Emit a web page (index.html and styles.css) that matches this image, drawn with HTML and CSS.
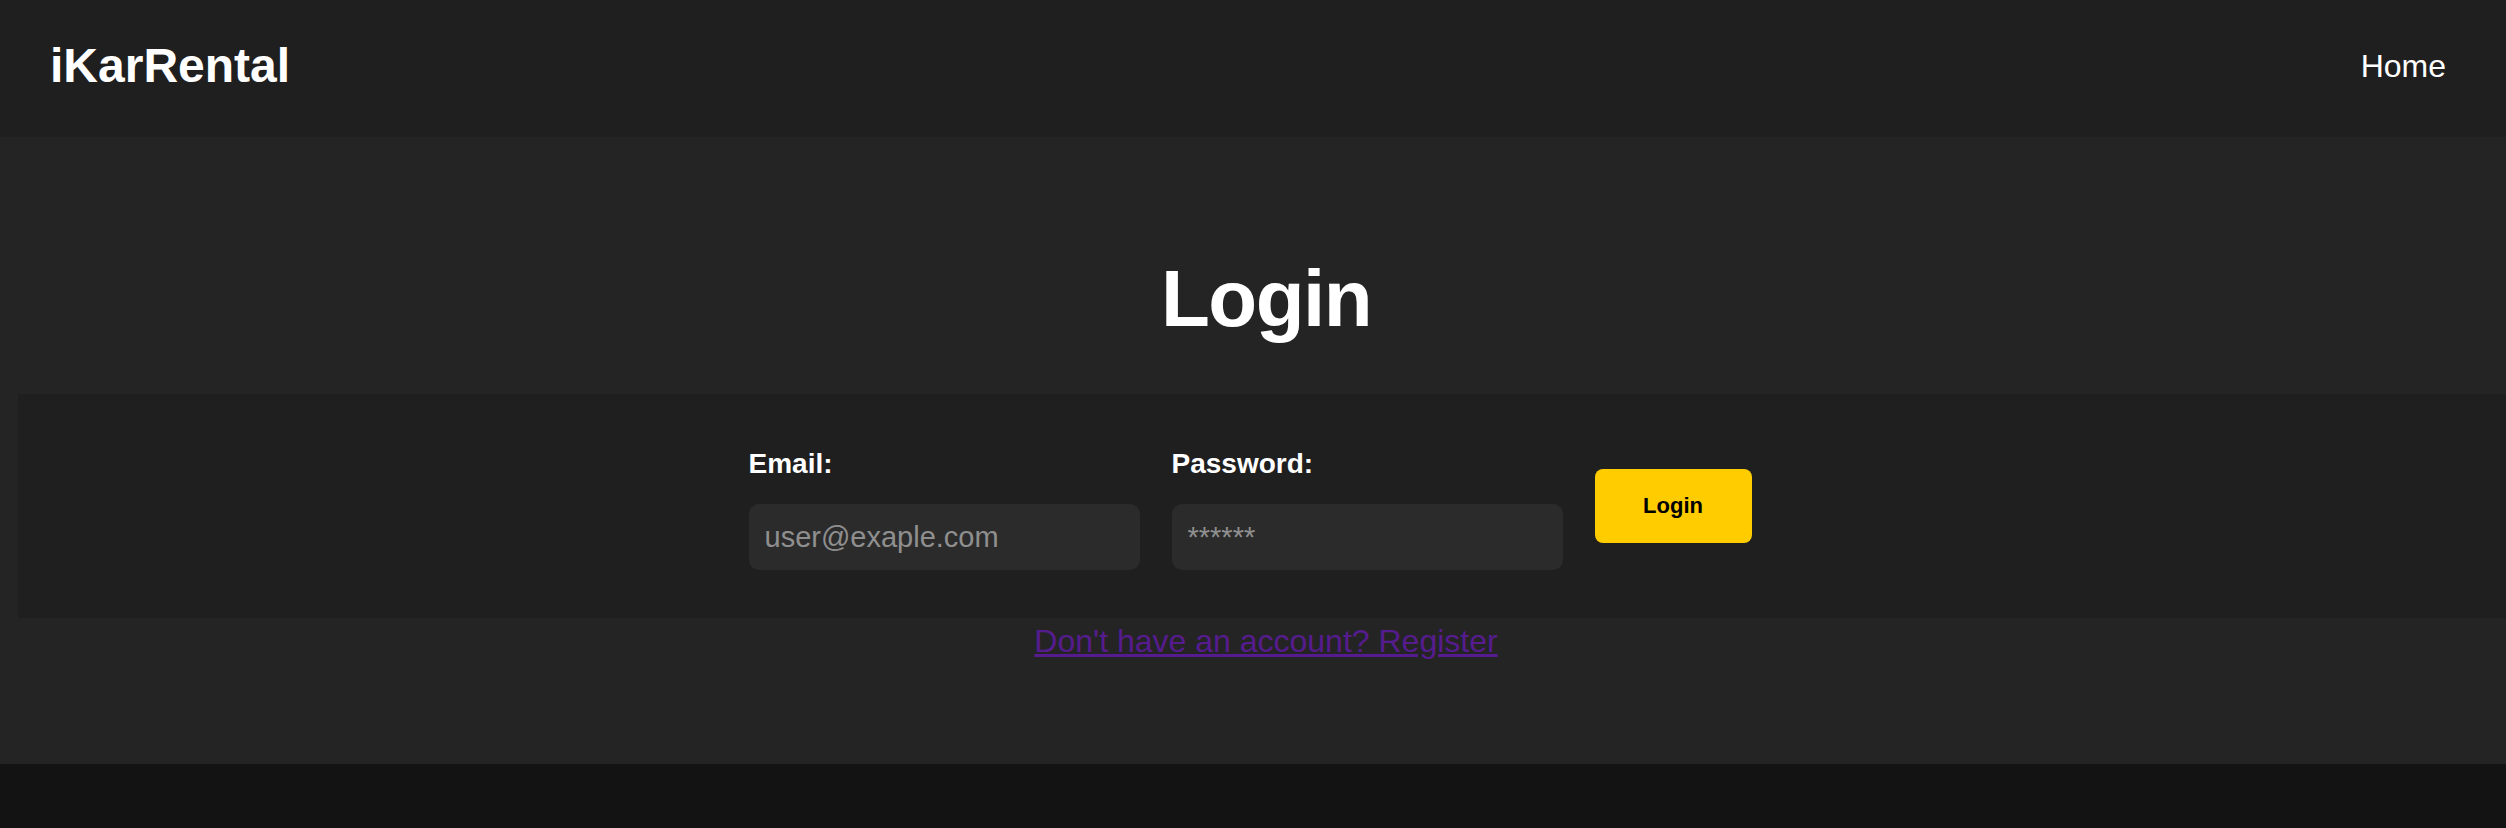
FILE: index.html
```html
<!DOCTYPE html>
<html lang="en">
<head>
<meta charset="utf-8">
<title>iKarRental - Login</title>
<link rel="stylesheet" href="styles.css">
</head>
<body>
<header class="topbar">
  <a class="logo" href="#">iKarRental</a>
  <nav class="nav"><a class="nav-link" href="#">Home</a></nav>
</header>
<main class="main">
  <h1 class="title">Login</h1>
  <form class="login-band">
    <div class="login-row">
      <div class="field">
        <label class="field-label" for="email">Email:</label>
        <input class="field-input" id="email" type="email" placeholder="user@exaple.com">
      </div>
      <div class="field">
        <label class="field-label" for="password">Password:</label>
        <input class="field-input" id="password" type="password" placeholder="******">
      </div>
      <button class="login-btn" type="button">Login</button>
    </div>
  </form>
  <a class="register-link" href="#">Don't have an account? Register</a>
</main>
</body>
</html>
```
FILE: styles.css
```css
html, body {
  margin: 0;
  padding: 0;
}
body {
  background: #131313;
  font-family: "Liberation Sans", Arial, sans-serif;
  color: #ffffff;
  width: 2506px;
  overflow: hidden;
}
.topbar {
  height: 137px;
  box-sizing: border-box;
  background: #1f1f1f;
  display: flex;
  align-items: center;
  justify-content: space-between;
  padding: 0 60px 0 50px;
}
.logo {
  color: #ffffff;
  text-decoration: none;
  font-weight: bold;
  font-size: 48px;
  line-height: 55px;
  margin-top: -6px;
}
.nav-link {
  color: #ffffff;
  text-decoration: none;
  font-size: 32px;
  line-height: 37px;
  margin-top: -4px;
  display: block;
}
.main {
  background: #242424;
  height: 627px;
  box-sizing: border-box;
  padding: 116px 0 0 26px;
  display: flex;
  flex-direction: column;
  align-items: center;
}
.title {
  margin: 0;
  font-size: 80px;
  line-height: 92px;
  font-weight: bold;
  letter-spacing: -1.5px;
  height: 92px;
}
.login-band {
  margin: 49px 0 0 -8px;
  align-self: stretch;
  background: #1f1f1f;
  height: 224px;
  box-sizing: border-box;
  padding: 54px 24px 48px 0;
}
.login-row {
  display: flex;
  justify-content: center;
  align-items: center;
  gap: 32px;
}
.field {
  display: flex;
  flex-direction: column;
  gap: 24px;
}
.field-label {
  font-weight: bold;
  font-size: 28px;
  line-height: 32px;
  color: #ffffff;
}
.field-input {
  width: 391px;
  height: 66px;
  box-sizing: border-box;
  border: none;
  outline: none;
  border-radius: 10px;
  background: #2b2b2b;
  color: #dddddd;
  padding: 0 16px;
  font-family: "Liberation Sans", Arial, sans-serif;
  font-size: 29px;
}
.field-input::placeholder {
  color: #8f8f8f;
}
.login-btn {
  background: #ffcc00;
  color: #000000;
  border: none;
  border-radius: 8px;
  font-family: "Liberation Sans", Arial, sans-serif;
  font-weight: bold;
  font-size: 22px;
  line-height: 26px;
  padding: 24px 48px;
  width: 157px;
  height: 74px;
  box-sizing: border-box;
  margin-bottom: 6px;
  cursor: pointer;
}
.register-link {
  margin-top: 5px;
  color: #561c8f;
  font-size: 32px;
  line-height: 37px;
  text-decoration: underline;
}
```
